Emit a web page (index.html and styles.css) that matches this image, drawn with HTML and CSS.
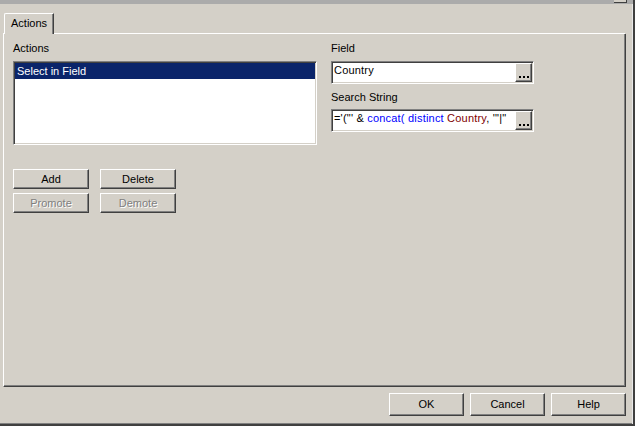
FILE: index.html
```html
<!DOCTYPE html>
<html>
<head>
<meta charset="utf-8">
<link rel="stylesheet" href="styles.css">
</head>
<body>
<div class="window">
  <div class="topbar"><div class="topbtn"></div></div>
  <div class="tabrow">
    <div class="tabgap"></div>
    <div class="tab">Actions</div>
    <div class="tabline"></div>
  </div>
  <div class="panel">
    <div class="col">
      <div class="label">Actions</div>
      <div class="listbox">
        <div class="item sel">Select in Field</div>
      </div>
      <div class="btngrid">
        <button class="btn">Add</button>
        <button class="btn">Delete</button>
        <button class="btn" disabled>Promote</button>
        <button class="btn" disabled>Demote</button>
      </div>
    </div>
    <div class="col">
      <div class="label">Field</div>
      <div class="input first">
        <div class="text">Country</div>
        <div class="browse"><span class="dot"></span><span class="dot"></span><span class="dot"></span></div>
      </div>
      <div class="label second">Search String</div>
      <div class="input second">
        <div class="text">='(&quot;' &amp; <span class="kw">concat(</span> <span class="kw">distinct</span> <span class="fld">Country</span>, '&quot;|&quot;</div>
        <div class="browse"><span class="dot"></span><span class="dot"></span><span class="dot"></span></div>
      </div>
    </div>
  </div>
  <div class="footer">
    <button class="btn big">OK</button>
    <button class="btn big">Cancel</button>
    <button class="btn big">Help</button>
  </div>
</div>
</body>
</html>
```
FILE: styles.css
```css
html, body {
  margin: 0;
  padding: 0;
  background: #d4d0c8;
}
body {
  font-family: "Liberation Sans", Arial, sans-serif;
  font-size: 11px;
  line-height: 13px;
  color: #000;
}
.window {
  width: 635px;
  height: 426px;
  box-sizing: border-box;
  border-right: 2px solid #404040;
  border-bottom: 2px solid #404040;
  box-shadow: inset -1px 0 #e8e8e8, inset 0 -1px #808080;
  background: #d4d0c8;
  display: flex;
  flex-direction: column;
}
.topbar {
  height: 4px;
  background: #ababab;
  display: flex;
  justify-content: flex-end;
  padding-right: 6px;
}
.topbtn {
  width: 12px;
  height: 2px;
  background: #d4d0c8;
  border-right: 1px solid #404040;
  border-bottom: 1px solid #404040;
}
.tabrow {
  width: 625px;
  height: 30px;
  display: flex;
  align-items: flex-end;
}
.tabgap {
  margin-left: 3px;
  width: 1px;
  height: 0;
  border-bottom: 1px solid #fff;
}
.tab {
  box-sizing: border-box;
  width: 50px;
  height: 21px;
  border-top: 1px solid #fff;
  border-left: 1px solid #fff;
  border-right: 1px solid #404040;
  border-top-left-radius: 2px;
  box-shadow: inset -1px 0 #808080;
  padding: 3px 0 0 6px;
}
.tabline {
  flex: 1;
  height: 0;
  border-bottom: 1px solid #fff;
}
.panel {
  margin-left: 3px;
  width: 623px;
  height: 353px;
  box-sizing: border-box;
  border-left: 1px solid #fff;
  border-right: 1px solid #404040;
  border-bottom: 1px solid #404040;
  box-shadow: inset -1px -1px #808080;
  padding: 8px 0 0 9px;
  display: grid;
  grid-template-columns: 304px 203px;
  column-gap: 14px;
  align-items: start;
}
.col {
  display: flex;
  flex-direction: column;
}
.label {
  height: 13px;
}
.label.second {
  margin-top: 7px;
}
.listbox {
  margin-top: 6px;
  width: 304px;
  height: 84px;
  box-sizing: border-box;
  background: #fff;
  border: 1px solid;
  border-color: #808080 #fff #fff #808080;
  box-shadow: inset 1px 1px #404040, inset -1px -1px #d4d0c8;
  padding: 1px;
}
.item {
  height: 16px;
  line-height: 16px;
  padding-left: 2px;
}
.item.sel {
  background: #0a246a;
  color: #fff;
}
.btngrid {
  margin-top: 24px;
  display: grid;
  grid-template-columns: 76px 76px;
  column-gap: 11px;
  row-gap: 4px;
}
.btn {
  box-sizing: border-box;
  height: 20px;
  margin: 0;
  padding: 0;
  font-family: "Liberation Sans", Arial, sans-serif;
  font-size: 11px;
  line-height: 13px;
  color: #000;
  background: #d4d0c8;
  border: 1px solid;
  border-color: #fff #404040 #404040 #fff;
  box-shadow: inset -1px -1px #808080;
  border-radius: 0;
  text-align: center;
}
.btn:disabled {
  color: #808080;
  text-shadow: 1px 1px 0 #fff;
}
.input {
  margin-top: 6px;
  width: 203px;
  height: 23px;
  box-sizing: border-box;
  background: #fff;
  border: 1px solid;
  border-color: #808080 #fff #fff #808080;
  box-shadow: inset 1px 1px #404040, inset -1px -1px #d4d0c8;
  padding: 1px;
  display: flex;
  align-items: stretch;
}
.input.second {
  margin-top: 5px;
}
.text {
  flex: 1;
  overflow: hidden;
  white-space: nowrap;
  padding-left: 1px;
  line-height: 13px;
  padding-top: 1px;
  letter-spacing: 0.2px;
}
.kw {
  color: #0000ff;
}
.fld {
  color: #800000;
}
.browse {
  width: 17px;
  box-sizing: border-box;
  background: #d4d0c8;
  border: 1px solid;
  border-color: #fff #404040 #404040 #fff;
  box-shadow: inset -1px -1px #808080;
  display: flex;
  align-items: flex-end;
  justify-content: center;
  gap: 2px;
  padding-bottom: 3px;
}
.dot {
  width: 2px;
  height: 2px;
  background: #000;
}
.footer {
  height: 37px;
  box-sizing: border-box;
  display: flex;
  justify-content: flex-end;
  align-items: flex-start;
  gap: 6px;
  padding: 6px 7px 0 0;
}
.btn.big {
  width: 75px;
  height: 23px;
}
```
